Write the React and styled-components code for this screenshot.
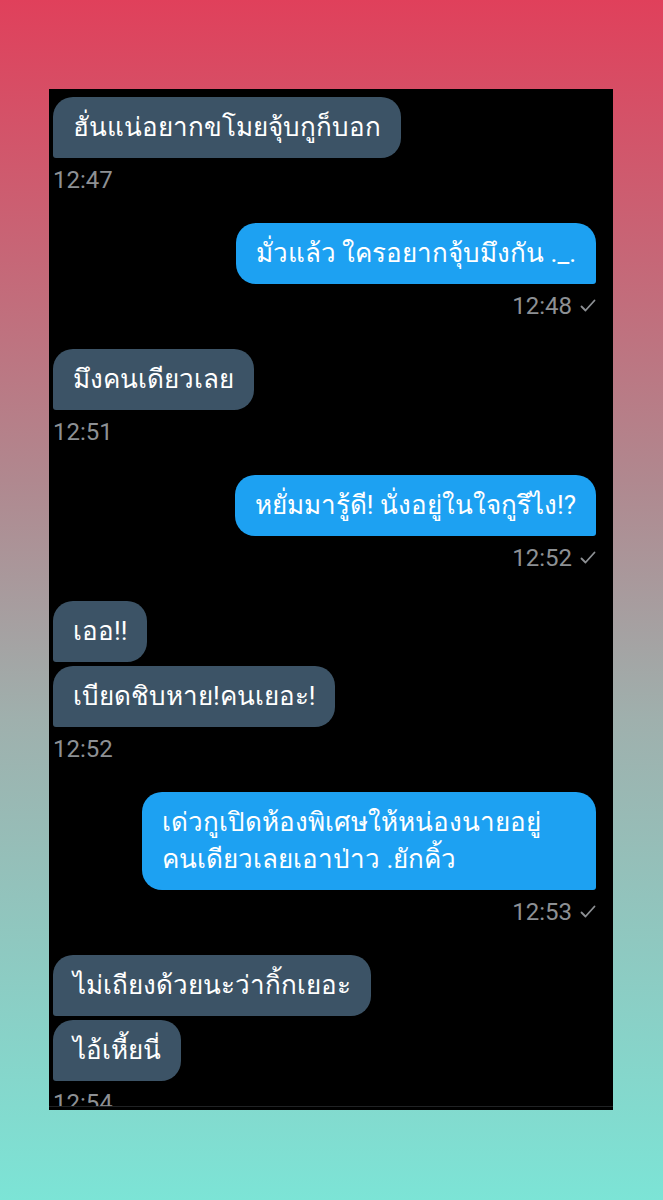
import React from "react";
import styled, { createGlobalStyle } from "styled-components";

const GlobalStyle = createGlobalStyle`
  body {
    margin: 0;
    font-family: Roboto, "Noto Sans", sans-serif;
  }
`;

const messages = [
  { out: false, lines: ["ฮั่นแน่อยากขโมยจุ้บกูก็บอก"], time: "12:47" },
  { out: true, lines: ["มั่วแล้ว ใครอยากจุ้บมึงกัน ._."], time: "12:48" },
  { out: false, lines: ["มึงคนเดียวเลย"], time: "12:51" },
  { out: true, lines: ["หยั่มมารู้ดี! นั่งอยู่ในใจกูรึไง!?"], time: "12:52" },
  { out: false, lines: ["เออ!!"] },
  { out: false, lines: ["เบียดชิบหาย!คนเยอะ!"], time: "12:52" },
  {
    out: true,
    lines: ["เด่วกูเปิดห้องพิเศษให้หน่องนายอยู่", "คนเดียวเลยเอาป่าว .ยักคิ้ว"],
    time: "12:53",
  },
  { out: false, lines: ["ไม่เถียงด้วยนะว่ากิ้กเยอะ"] },
  { out: false, lines: ["ไอ้เหี้ยนี่"], time: "12:54" },
];

const Check = () => (
  <svg width="16" height="16" viewBox="0 0 16 16">
    <polyline
      points="1.5,8.5 5.5,12.5 14.5,2.5"
      fill="none"
      stroke="#8d9094"
      strokeWidth="1.8"
      strokeLinecap="round"
      strokeLinejoin="round"
    />
  </svg>
);

const App = () => {
  return (
    <Page>
      <GlobalStyle />
      <Panel>
        <Thread>
          {messages.map((m, i) => (
            <Group key={i} $out={m.out} $last={!!m.time}>
              <Bubble $out={m.out} $wide={m.lines.length > 1}>
                {m.lines.map((l, j) => (
                  <div key={j}>{l}</div>
                ))}
              </Bubble>
              {m.time && (
                <Time>
                  {m.time}
                  {m.out && <Check />}
                </Time>
              )}
            </Group>
          ))}
        </Thread>
      </Panel>
    </Page>
  );
};

export default App;

const Page = styled.div`
  width: 663px;
  height: 1200px;
  box-sizing: border-box;
  padding: 89px 50px 90px 49px;
  background: linear-gradient(180deg, #e0405b 0%, #b0888f 40%, #9fb0ad 60%, #7ce4d6 100%);
`;

const Panel = styled.div`
  width: 564px;
  height: 1021px;
  box-sizing: border-box;
  background: #000;
  padding-bottom: 3px;
`;

const Thread = styled.div`
  height: 1018px;
  box-sizing: border-box;
  overflow: hidden;
  padding: 8px 17px 0 4px;
  border-bottom: 1px solid #202224;
  display: flex;
  flex-direction: column;
`;

const Group = styled.div`
  display: flex;
  flex-direction: column;
  align-items: ${(p) => (p.$out ? "flex-end" : "flex-start")};
  margin-bottom: ${(p) => (p.$last ? "27px" : "4px")};
`;

const Bubble = styled.div`
  background: ${(p) => (p.$out ? "#1da1f2" : "#3c5366")};
  color: #fff;
  font-size: 26px;
  line-height: 37px;
  padding: 12px 20px;
  width: ${(p) => (p.$wide ? "454px" : "auto")};
  box-sizing: border-box;
  border-radius: ${(p) => (p.$out ? "20px 20px 3px 20px" : "20px 20px 20px 3px")};
  white-space: nowrap;
`;

const Time = styled.div`
  margin-top: 6px;
  height: 32px;
  display: flex;
  align-items: center;
  gap: 8px;
  color: #8d9094;
  font-size: 24px;
`;
